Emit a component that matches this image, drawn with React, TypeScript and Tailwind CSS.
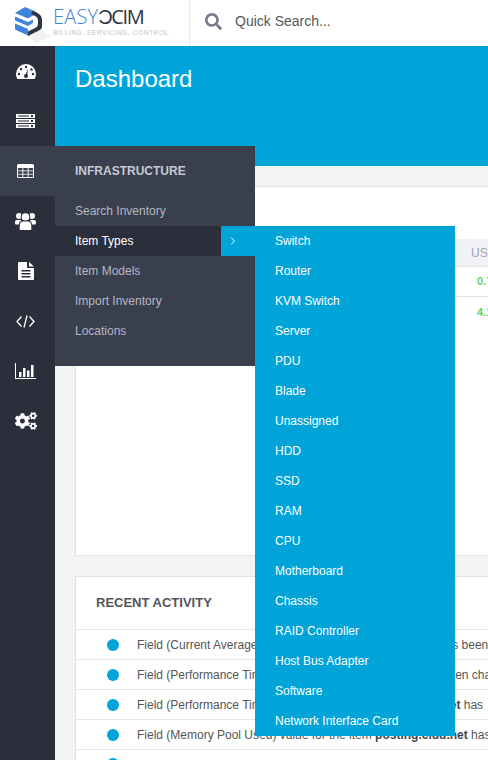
import React from 'react';
import { FaCogs, FaSearch } from 'react-icons/fa';
import { ChevronRight } from 'lucide-react';

const dark = '#2b2f3b';

const GaugeIcon = () => (
  <svg width="20" height="15" viewBox="0 0 20 15">
    <path d="M10 0A10 10 0 0 0 0 10Q0 12.500 1.500 15H18.500Q20 12.500 20 10A10 10 0 0 0 10 0Z" fill="#fff" />
    <g fill={dark}>
      <circle cx="10" cy="3" r="1.200" />
      <circle cx="5" cy="5" r="1.200" />
      <circle cx="3" cy="10" r="1.200" />
      <circle cx="15.500" cy="5.500" r="1.200" />
      <circle cx="17" cy="10" r="1.200" />
      <circle cx="10" cy="12" r="2" />
      <path d="M9 12L12 4.500L11.200 12Z" />
    </g>
  </svg>
);

const ServerIcon = () => (
  <svg width="19" height="14" viewBox="0 0 19 14">
    {[0, 5, 10].map((y) => (
      <g key={y}>
        <rect y={y} width="19" height="4" fill="#fff" />
        <rect x="2" y={y + 1} width="11" height="2" fill="#8b8e98" />
        <rect x="15" y={y + 1} width="2" height="2" fill={dark} />
      </g>
    ))}
  </svg>
);

const TableIcon = () => (
  <svg width="17" height="14" viewBox="0 0 17 14">
    <rect width="17" height="14" rx="1.500" fill="#fff" />
    <g fill="#3a3f4e">
      {[4, 7.300, 10.600].map((y) =>
        [1, 6.300, 11.600].map((x) => <rect key={`${x}-${y}`} x={x} y={y} width="4.400" height="2.500" />)
      )}
    </g>
  </svg>
);

const UsersIcon = () => (
  <svg width="21" height="18" viewBox="0 0 21 18">
    <circle cx="4" cy="4" r="3" fill="#fff" />
    <circle cx="17" cy="4" r="3" fill="#fff" />
    <path d="M0 9.500Q0 8 2 8H6V12.500H1Q0 12.500 0 11Z" fill="#fff" />
    <path d="M21 9.500Q21 8 19 8H15V12.500H20Q21 12.500 21 11Z" fill="#fff" />
    <circle cx="10.500" cy="5" r="4.800" fill={dark} />
    <circle cx="10.500" cy="5" r="3.800" fill="#fff" />
    <path d="M4 18V13Q4 8.500 7.500 8.500H13.500Q17 8.500 17 13V18Z" fill={dark} />
    <path d="M5 18Q4.500 18 4.800 13.500Q5 9.500 8 9.500H13Q16 9.500 16.200 13.500Q16.500 18 16 18Z" fill="#fff" />
  </svg>
);

const FileIcon = () => (
  <svg width="16" height="18" viewBox="0 0 16 18">
    <path d="M1 0H9V6H16V17A1 1 0 0 1 15 18H1A1 1 0 0 1 0 17V1A1 1 0 0 1 1 0Z" fill="#fff" />
    <path d="M11 0L16 4.500H11Z" fill="#fff" />
    <rect x="3.500" y="8" width="9" height="1.500" fill={dark} />
    <rect x="3.500" y="11" width="9" height="1.500" fill={dark} />
    <rect x="3.500" y="14" width="9" height="1.500" fill={dark} />
  </svg>
);

const CodeIcon = () => (
  <svg width="19" height="13" viewBox="0 0 19 13" fill="none" stroke="#fff" strokeWidth="1.300">
    <path d="M5.500 1.500L1 6.500L5.500 11.500" />
    <path d="M13.500 1.500L18 6.500L13.500 11.500" />
    <path d="M11 0.500L8 12.500" />
  </svg>
);

const ChartIcon = () => (
  <svg width="21" height="16" viewBox="0 0 21 16" fill="#fff">
    <rect x="0" y="0" width="1" height="16" />
    <rect x="0" y="15" width="21" height="1" />
    <rect x="4" y="9" width="2.500" height="5" />
    <rect x="8" y="5" width="2.500" height="9" />
    <rect x="12" y="7.500" width="2.500" height="6.500" />
    <rect x="16" y="2" width="2.500" height="12" />
  </svg>
);

const CogsIcon = () => <FaCogs size={22} />;

const navIcons = [GaugeIcon, ServerIcon, TableIcon, UsersIcon, FileIcon, CodeIcon, ChartIcon, CogsIcon];

const infraLinks = ['Search Inventory', 'Item Types', 'Item Models', 'Import Inventory', 'Locations'];

const itemTypes = [
  'Switch', 'Router', 'KVM Switch', 'Server', 'PDU', 'Blade', 'Unassigned', 'HDD', 'SSD', 'RAM', 'CPU',
  'Motherboard', 'Chassis', 'RAID Controller', 'Host Bus Adapter', 'Software', 'Network Interface Card',
];

// hidden parts of these rows sit under the flyout, only the two ends show
const activity = [
  { text: 'Field (Current Average Latency Timer) value for the item has been' },
  { text: 'Field (Performance Time) value for the item postings has been changed' },
  { text: 'Field (Performance Time) value for the item ', bold: 'posting.cltd.net', tail: ' has' },
  { text: 'Field (Memory Pool Used) value for the item ', bold: 'posting.clud.net', tail: ' has' },
];

const Logo = () => (
  <svg width="36" height="38" viewBox="15 5 36 38" className="shrink-0">
    <polygon points="28,36 41,30 51,36 36,43" fill="#f0f1f3" />
    <polygon points="15,13 25,7 33,10.500 37,13 28,18.500" fill="#3f83dd" />
    <path d="M15 16.500L28 22L33 19.500V23L28 26L15 20.500Z" fill="#3f83dd" />
    <path d="M15 23.500L28 29V35.500L15 29.500Z" fill="#3f83dd" />
    <path d="M33 10.500L39 14Q42 16 42 19V26Q42 29 39 30.500L28 36V31.500L36 27.500Q38 26.500 38 24V20Q38 17.500 36 16.500L31 14Z" fill="#2f3542" />
  </svg>
);

export default function App() {
  return (
    <div className="relative w-[488px] h-[760px] overflow-hidden bg-[#f3f3f3] font-['Liberation_Sans',Arial,sans-serif]">
      {/* Top bar */}
      <header className="h-[46px] bg-white flex">
        <div className="w-[190px] shrink-0 border-r border-[#e8e8e8] flex pl-[15px] pt-[5px] overflow-hidden">
          <Logo />
          <div className="ml-[2px] pt-[1px]">
            <div className="flex items-baseline text-[20px] leading-[22px] font-['Open_Sans',sans-serif] font-light">
              <span className="text-[#3f83dd] tracking-[0.2px]">EASY</span>
              <span className="text-[#2f3542] font-normal tracking-[-1.4px]">ƆCIM</span>
            </div>
            <div className="mt-[1px] text-[6.5px] leading-[8px] tracking-[0.6px] text-[#bfc2ca] whitespace-nowrap">BILLING. SERVICING. CONTROL.</div>
          </div>
        </div>
        <div className="flex items-center pl-[15px] pb-[4px]">
          <FaSearch size={17} className="text-[#777d8c]" />
          <span className="ml-[13px] text-[14px] text-[#555]">Quick Search...</span>
        </div>
      </header>

      <div className="flex h-[714px]">
        {/* Icon sidebar */}
        <nav className="w-[55px] shrink-0 bg-[#2b2f3b] flex flex-col">
          {navIcons.map((Icon, i) => (
            <div key={i} className={`h-[50px] flex items-center justify-center pr-[4px] text-white ${i === 2 ? 'bg-[#3a3f4e]' : ''}`}>
              <Icon />
            </div>
          ))}
        </nav>

        {/* Main column */}
        <main className="flex-1 min-w-0">
          <div className="h-[120px] bg-[#00a4d9] px-5 pt-[16px]">
            <h1 className="text-[24px] leading-[33px] text-white">Dashboard</h1>
          </div>
          <div className="pl-5 pt-5">
            <div className="w-[500px] h-[370px] bg-white border border-[#e2e2e2] pt-[52px]">
              <div className="h-[28px] ml-[100px] bg-[#f1f2f6] border-b border-[#e2e3ea] flex items-center pl-[295px] text-[12px] text-[#a3a6b1]">
                US
              </div>
              <div className="h-[30px] ml-[100px] border-b border-[#e2e3ea] flex items-center pl-[301px] text-[11px] font-bold text-[#62d36a]">
                0.7
              </div>
              <div className="h-[30px] ml-[100px] flex items-center pl-[301px] text-[11px] font-bold text-[#62d36a]">
                4.1
              </div>
            </div>
            <div className="w-[500px] mt-5 bg-white border border-[#e2e2e2]">
              <div className="h-[53px] flex items-center pl-5 border-b border-[#e6e6ec]">
                <h2 className="text-[13px] font-bold text-[#555560]">RECENT ACTIVITY</h2>
              </div>
              {activity.map((row, i) => (
                <div key={i} className="h-[30px] flex items-center border-b border-[#e6e6ec] pl-[31px] whitespace-nowrap overflow-hidden">
                  <span className="w-3 h-3 rounded-full bg-[#00a4d9] shrink-0" />
                  <span className="ml-[18px] text-[12px] text-[#555]">
                    {row.text}
                    {row.bold && <b className="text-[#444]">{row.bold}</b>}
                    {row.tail}
                  </span>
                </div>
              ))}
              <div className="h-[30px] flex pt-[8px] pl-[31px]">
                <span className="w-3 h-3 rounded-full bg-[#00a4d9] shrink-0" />
              </div>
            </div>
          </div>
        </main>
      </div>

      {/* Infrastructure flyout */}
      <div className="absolute left-[55px] top-[146px] w-[200px] h-[220px] bg-[#3a3f4e]">
        <div className="h-[50px] pl-5 flex items-center text-[12px] font-bold text-[#c6c9d4]">INFRASTRUCTURE</div>
        {infraLinks.map((label) => (
          <div key={label} className={`h-[30px] pl-5 flex items-center text-[12px] ${label === 'Item Types' ? 'bg-[#2b2f3b] text-white' : 'text-[#b4b7c3]'}`}>
            {label}
          </div>
        ))}
      </div>

      {/* Item types flyout */}
      <div className="absolute left-[221px] top-[226px] flex items-start">
        <div className="w-[34px] h-[30px] bg-[#00a4d9] flex items-center pl-[6px] text-white">
          <ChevronRight size={12} strokeWidth={2} />
        </div>
        <ul className="w-[200px] bg-[#00a4d9]">
          {itemTypes.map((t) => (
            <li key={t} className="h-[30px] pl-5 flex items-center text-[12px] text-white">{t}</li>
          ))}
        </ul>
      </div>
    </div>
  );
}
